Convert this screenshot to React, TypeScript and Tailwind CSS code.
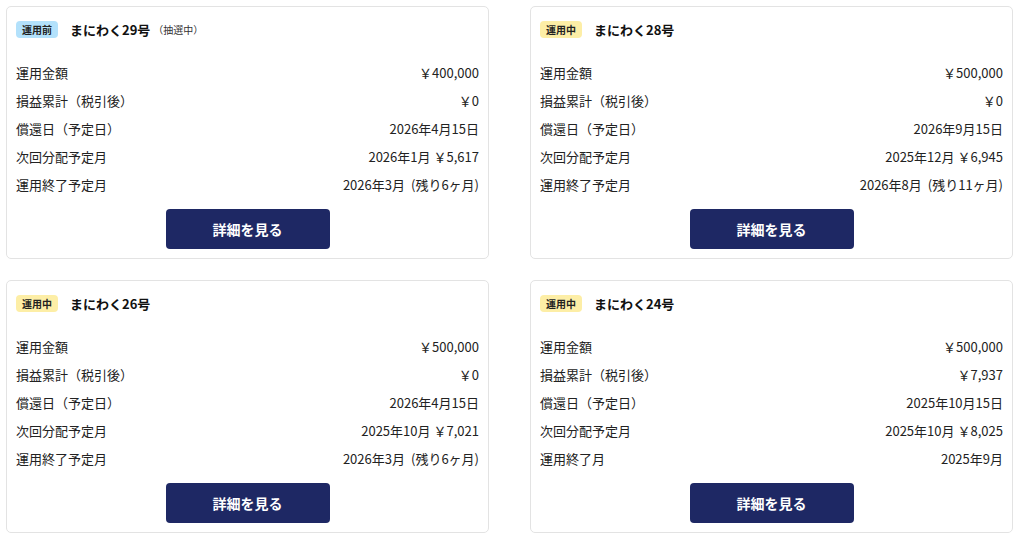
type Row = { label: string; value: string[] }

type Fund = {
  status: '運用前' | '運用中'
  name: string
  note?: string
  rows: Row[]
}

const funds: Fund[] = [
  {
    status: '運用前',
    name: 'まにわく29号',
    note: '（抽選中）',
    rows: [
      { label: '運用金額', value: ['￥400,000'] },
      { label: '損益累計（税引後）', value: ['￥0'] },
      { label: '償還日（予定日）', value: ['2026年4月15日'] },
      { label: '次回分配予定月', value: ['2026年1月', '￥5,617'] },
      { label: '運用終了予定月', value: ['2026年3月', '(残り6ヶ月)'] },
    ],
  },
  {
    status: '運用中',
    name: 'まにわく28号',
    rows: [
      { label: '運用金額', value: ['￥500,000'] },
      { label: '損益累計（税引後）', value: ['￥0'] },
      { label: '償還日（予定日）', value: ['2026年9月15日'] },
      { label: '次回分配予定月', value: ['2025年12月', '￥6,945'] },
      { label: '運用終了予定月', value: ['2026年8月', '(残り11ヶ月)'] },
    ],
  },
  {
    status: '運用中',
    name: 'まにわく26号',
    rows: [
      { label: '運用金額', value: ['￥500,000'] },
      { label: '損益累計（税引後）', value: ['￥0'] },
      { label: '償還日（予定日）', value: ['2026年4月15日'] },
      { label: '次回分配予定月', value: ['2025年10月', '￥7,021'] },
      { label: '運用終了予定月', value: ['2026年3月', '(残り6ヶ月)'] },
    ],
  },
  {
    status: '運用中',
    name: 'まにわく24号',
    rows: [
      { label: '運用金額', value: ['￥500,000'] },
      { label: '損益累計（税引後）', value: ['￥7,937'] },
      { label: '償還日（予定日）', value: ['2025年10月15日'] },
      { label: '次回分配予定月', value: ['2025年10月', '￥8,025'] },
      { label: '運用終了月', value: ['2025年9月'] },
    ],
  },
]

function FundCard({ fund }: { fund: Fund }) {
  return (
    <div className="flex flex-col rounded-[5px] border border-[#e3e3e3] bg-white pl-[9px] pr-[9px] pt-[14px] pb-[9px]">
      <div className="flex h-[17px] items-center">
        {fund.status === '運用前' ? (
          <span className="flex h-[17px] w-[42px] items-center justify-center rounded-[4px] bg-[#b3e1fb] text-[10px] font-bold text-[#222]">
            運用前
          </span>
        ) : (
          <span className="flex h-[17px] w-[42px] items-center justify-center rounded-[4px] bg-[#fdeea6] text-[10px] font-bold text-[#222]">
            運用中
          </span>
        )}
        <span className="ml-[12px] text-[13px] font-bold text-[#111]">{fund.name}</span>
        {fund.note && <span className="ml-[3px] text-[10px] text-[#333]">{fund.note}</span>}
      </div>

      <div className="mt-[21px] flex flex-col">
        {fund.rows.map((r) => (
          <div key={r.label} className="flex h-[28px] items-center justify-between text-[13px] text-[#222]">
            <span>{r.label}</span>
            <span className="flex">
              <span>{r.value[0]}</span>
              {r.value[1] && (
                <span className={r.value[1].startsWith('(') ? 'ml-[6px]' : 'ml-[3px]'}>{r.value[1]}</span>
              )}
            </span>
          </div>
        ))}
      </div>

      <button className="mx-auto mt-[10px] h-[40px] w-[164px] rounded-[4px] bg-[#1e2864] text-[14px] font-bold text-white">
        詳細を見る
      </button>
    </div>
  )
}

export default function App() {
  return (
    <div
      className="grid w-full grid-cols-[483px_483px] gap-x-[41px] gap-y-[21px] bg-white pl-[6px] pt-[6px]"
      style={{ fontFamily: '"Noto Sans CJK JP", "Noto Sans", sans-serif' }}
    >
      {funds.map((f) => (
        <FundCard key={f.name} fund={f} />
      ))}
    </div>
  )
}
